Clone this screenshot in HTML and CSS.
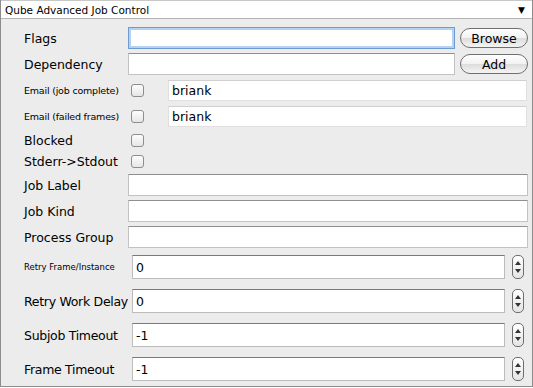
FILE: index.html
```html
<!DOCTYPE html>
<html lang="en">
<head>
    <meta charset="UTF-8">
    <title>Qube Advanced Job Control</title>
    <link rel="stylesheet" href="styles.css">
</head>
<body>

    <div class="panel">
        <div class="panel-header">
            <span>Qube Advanced Job Control</span>
            <span class="arrow">&#9660;</span>
        </div>

        <div class="panel-body">
            <div class="row first">
                <label class="label">Flags</label>
                <input type="text" class="field field-short focused">
                <button type="button" class="pill">Browse</button>
            </div>

            <div class="row">
                <label class="label">Dependency</label>
                <input type="text" class="field field-short">
                <button type="button" class="pill">Add</button>
            </div>

            <div class="row">
                <label class="label small">Email (job complete)</label>
                <span class="check"></span>
                <input type="text" class="field field-mail" value="briank">
            </div>

            <div class="row">
                <label class="label small">Email (failed frames)</label>
                <span class="check"></span>
                <input type="text" class="field field-mail" value="briank">
            </div>

            <div class="row row-check">
                <label class="label">Blocked</label>
                <span class="check"></span>
            </div>

            <div class="row row-check short">
                <label class="label">Stderr-&gt;Stdout</label>
                <span class="check"></span>
            </div>

            <div class="row">
                <label class="label">Job Label</label>
                <input type="text" class="field field-wide">
            </div>

            <div class="row">
                <label class="label">Job Kind</label>
                <input type="text" class="field field-wide">
            </div>

            <div class="row">
                <label class="label">Process Group</label>
                <input type="text" class="field field-wide">
            </div>

            <div class="row row-spin">
                <label class="label tiny">Retry Frame/Instance</label>
                <input type="text" class="field field-spin" value="0">
                <span class="spinner"><i class="up"></i><i class="down"></i></span>
            </div>

            <div class="row row-spin">
                <label class="label">Retry Work Delay</label>
                <input type="text" class="field field-spin" value="0">
                <span class="spinner"><i class="up"></i><i class="down"></i></span>
            </div>

            <div class="row row-spin">
                <label class="label">Subjob Timeout</label>
                <input type="text" class="field field-spin" value="-1">
                <span class="spinner"><i class="up"></i><i class="down"></i></span>
            </div>

            <div class="row row-spin">
                <label class="label">Frame Timeout</label>
                <input type="text" class="field field-spin" value="-1">
                <span class="spinner"><i class="up"></i><i class="down"></i></span>
            </div>
        </div>
    </div>

</body>
</html>
```

FILE: styles.css
```css
body {
    margin: 0;
    font-family: 'DejaVu Sans', sans-serif;
    color: #000;
    background-color: #fff;
}

.panel {
    width: 533px;
    height: 387px;
    box-sizing: border-box;
    border: 1px solid #8c8c8c;
    border-top: none;
    background-color: #ececec;
}

.panel-header {
    height: 19px;
    box-sizing: border-box;
    display: flex;
    align-items: center;
    justify-content: space-between;
    padding: 0 7px 0 4px;
    background-color: #fff;
    border-bottom: 1px solid #b5b5b5;
    border-top: 1px solid #c8c8c8;
    font-size: 10.5px;
}

.arrow {
    font-size: 9px;
}

.panel-body {
    padding: 6px 0 0 23px;
}

.row {
    display: flex;
    align-items: center;
    height: 26px;
}

.row-check {
    height: 22px;
}

.row-check.short {
    height: 21px;
}

.row-spin {
    height: 34px;
}

.label {
    width: 104px;
    flex: none;
    white-space: nowrap;
    font-size: 12.5px;
}

.label.small {
    font-size: 9.5px;
    letter-spacing: -0.2px;
}

.label.tiny {
    font-size: 8.5px;
}

.row-spin .label {
    width: 108px;
    letter-spacing: -0.3px;
}

.row-spin .label.tiny {
    letter-spacing: 0;
}

.field {
    box-sizing: border-box;
    height: 22px;
    padding: 0 3px;
    font-family: inherit;
    font-size: 12.5px;
    background-color: #fff;
    border: 1px solid #c3c3c3;
    border-top-color: #8f8f8f;
    border-radius: 0;
    outline: none;
}

.field-short {
    width: 327px;
}

.field.focused {
    border-color: #6e9bd2;
    box-shadow: inset 0 0 0 2px #b6d2f1;
}

.field-mail {
    width: 359px;
    height: 21px;
    margin-left: 24px;
    border-color: #e0e0e0;
    border-top-color: #d0d0d0;
}

.field-wide {
    width: 400px;
}

.field-spin {
    width: 373px;
    height: 24px;
    border-color: #bcbcbc;
    border-top-color: #7a7a7a;
}

.pill {
    width: 68px;
    height: 20px;
    margin-left: 5px;
    padding: 0;
    font-family: inherit;
    font-size: 12.5px;
    border: 1px solid #6f6f6f;
    border-radius: 10px;
    background: linear-gradient(#ffffff, #f1f1f1 50%, #dcdcdc 51%, #f4f4f4);
    color: #000;
}

.check {
    width: 13px;
    height: 13px;
    box-sizing: border-box;
    margin-left: 3px;
    border: 1px solid #8d8d8d;
    border-radius: 3px;
    background: linear-gradient(#fdfdfd, #e6e6e6);
}

.spinner {
    width: 12px;
    height: 24px;
    box-sizing: border-box;
    margin-left: 7px;
    border: 1px solid #6e6e6e;
    border-radius: 5px;
    background: linear-gradient(#ffffff, #e4e4e4);
    display: flex;
    flex-direction: column;
    align-items: center;
    justify-content: space-around;
    padding: 3px 0;
}

.spinner .up {
    width: 0;
    height: 0;
    border-left: 3px solid transparent;
    border-right: 3px solid transparent;
    border-bottom: 4px solid #333;
}

.spinner .down {
    width: 0;
    height: 0;
    border-left: 3px solid transparent;
    border-right: 3px solid transparent;
    border-top: 4px solid #333;
}
```
